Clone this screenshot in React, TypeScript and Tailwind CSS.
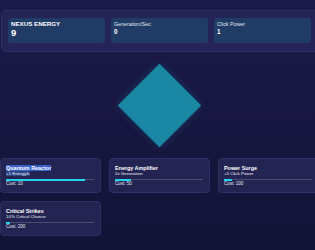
import React from "react";

const stats = [
  { label: "NEXUS ENERGY", value: "9", main: true },
  { label: "Generation/Sec", value: "0", main: false },
  { label: "Click Power", value: "1", main: false },
];

const upgrades = [
  { name: "Quantum Reactor", desc: "+1 Energy/s", cost: 10, sel: true },
  { name: "Energy Amplifier", desc: "2x Generation", cost: 50, sel: false },
  { name: "Power Surge", desc: "+5 Click Power", cost: 100, sel: false },
  { name: "Critical Strikes", desc: "10% Critical Chance", cost: 200, sel: false },
];

const energy = 9;

export default function App() {
  return (
    <div
      className="w-[315px] h-[250px] overflow-hidden bg-gradient-to-b from-[#1c1a4a] to-[#131338] pt-[10px]"
      style={{ fontFamily: '"Liberation Sans", Arial, sans-serif' }}
    >
      <div className="ml-[1px] w-[320px] h-[42px] rounded-[5px] border border-[#2f2e62] bg-[#252456] pl-[6px] pt-[7px]">
        <div className="grid grid-cols-[97px_97px_97px] gap-[6px]">
          {stats.map((s) => (
            <div key={s.label} className="h-[25px] rounded-[3px] bg-[#1f3b66] pl-[3px] pt-[2px]">
              <div
                className={
                  s.main
                    ? "text-[6.2px] leading-[8px] font-bold text-white"
                    : "text-[5.3px] leading-[8px] text-[#e2e6f0]"
                }
              >
                {s.label}
              </div>
              <div
                className={
                  s.main
                    ? "text-[9.5px] leading-[10px] font-bold text-white"
                    : "text-[6.3px] leading-[7px] font-bold text-white"
                }
              >
                {s.value}
              </div>
            </div>
          ))}
        </div>
      </div>

      <div className="h-[106px] flex items-center justify-center pl-[3px]">
        <div className="w-[59px] h-[59px] rotate-45 bg-[#1a88a4] shadow-[0_0_8px_rgba(27,139,167,0.3)]" />
      </div>

      <div className="grid grid-cols-[101px_101px_101px] gap-x-[8px] gap-y-[8px]">
        {upgrades.map((u) => (
          <div
            key={u.name}
            className="h-[35px] rounded-[4px] border border-[#302f62] bg-[#242452] px-[5px] pt-[6px]"
          >
            <div className="text-[5.4px] leading-[6px] font-bold text-white">
              <span className={u.sel ? "bg-[#3760c8]" : ""}>{u.name}</span>
            </div>
            <div className="text-[4.4px] leading-[6px] text-[#eceef6]">
              <span className={u.sel ? "bg-[#2c4585]" : ""}>{u.desc}</span>
            </div>
            <div className="mt-[2px] h-[1px] w-[88px] bg-[#4a4a72]">
              <div
                className="h-[1.5px] bg-[#22d3ee]"
                style={{ width: `${Math.min(100, (energy / u.cost) * 100)}%` }}
              />
            </div>
            <div className="mt-[1px] text-[4.5px] leading-[6px] text-[#e6e8f2]">Cost: {u.cost}</div>
          </div>
        ))}
      </div>
    </div>
  );
}
